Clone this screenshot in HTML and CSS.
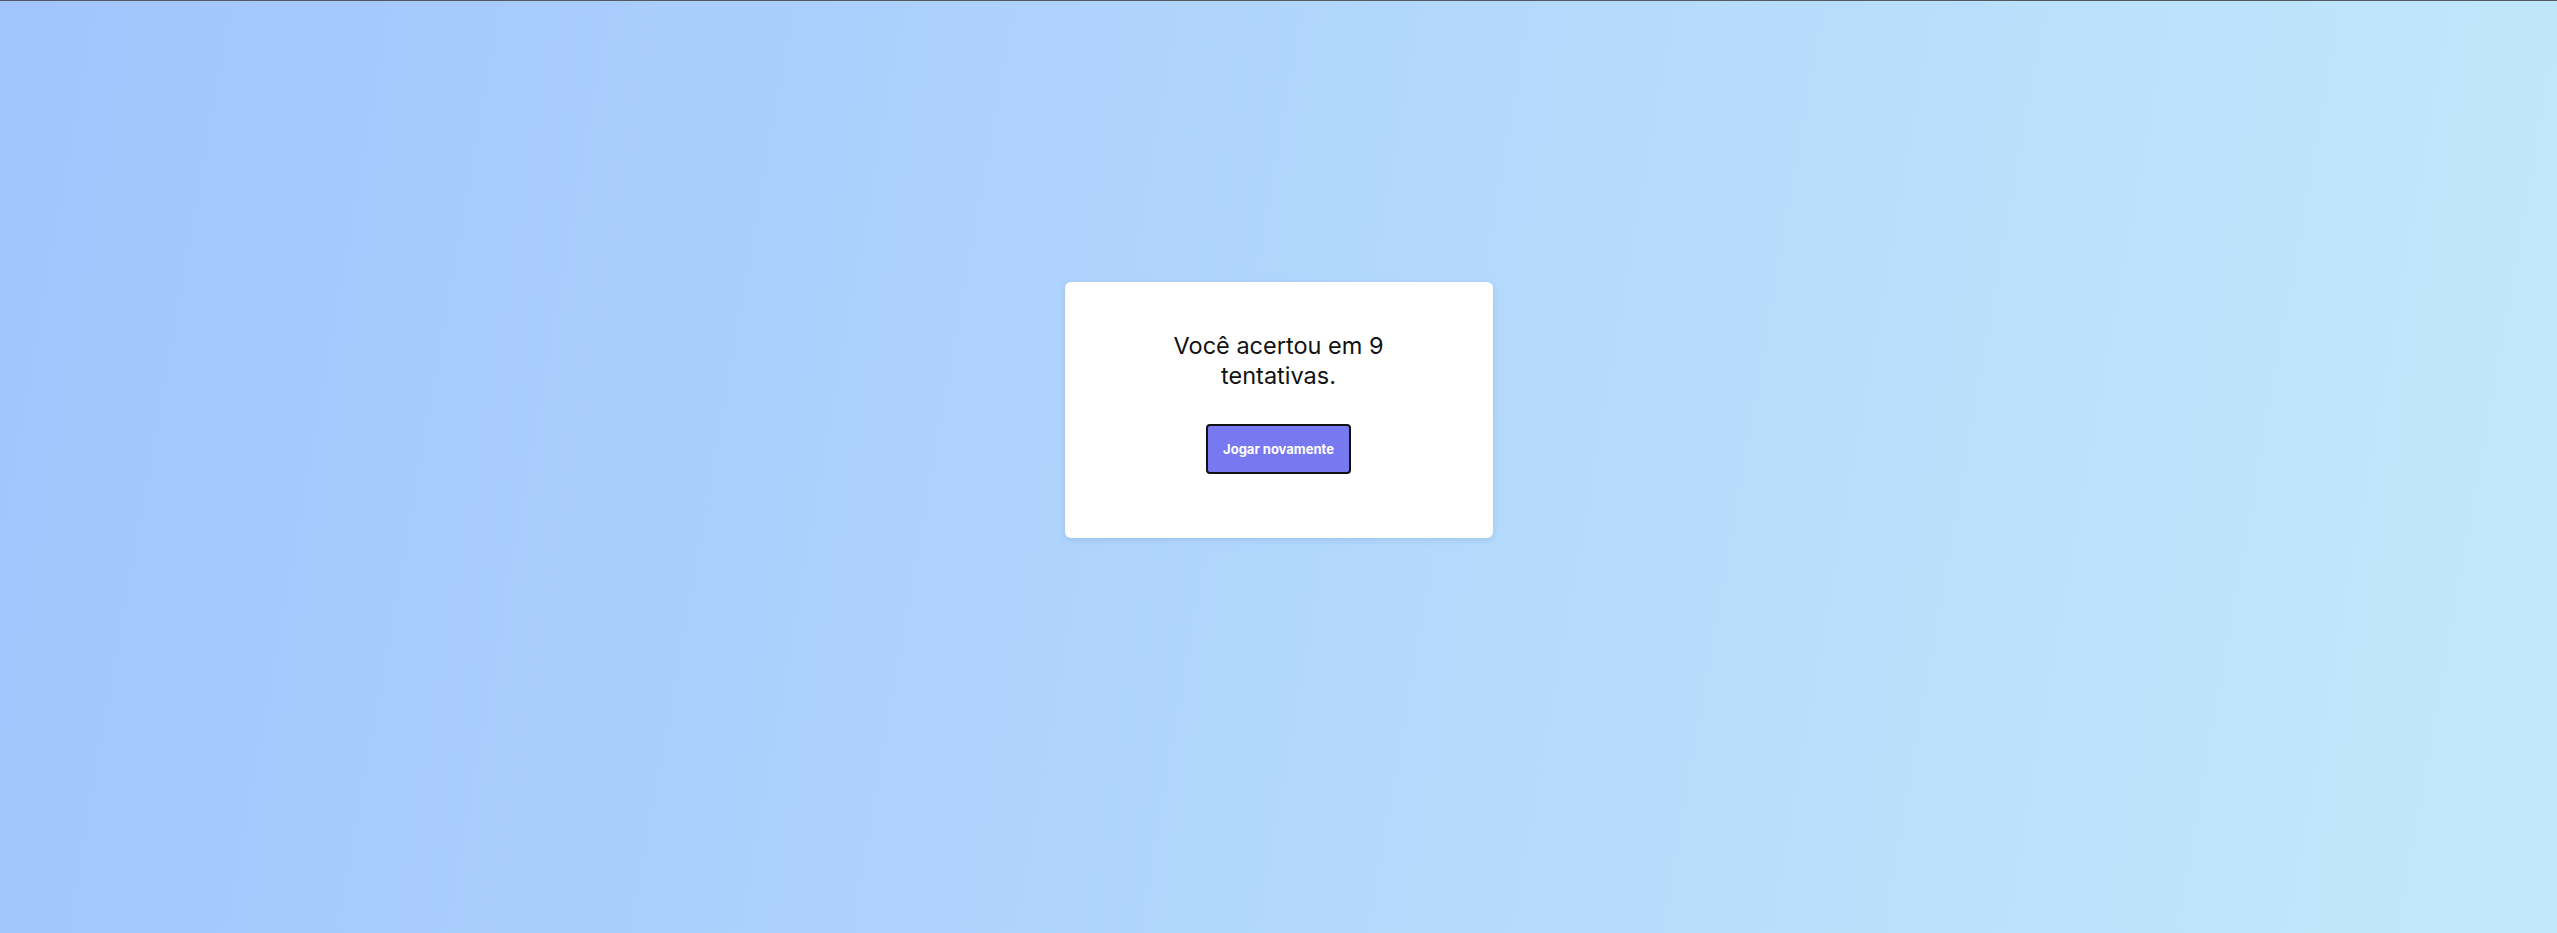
FILE: index.html
```html
<!DOCTYPE html>
<html lang="pt-BR">
<head>
<meta charset="utf-8">
<title>Resultado</title>
<link rel="stylesheet" href="styles.css">
</head>
<body>
<main class="page">
  <section class="card">
    <h2 class="result">Você acertou em 9 tentativas.</h2>
    <button class="btn" type="button">Jogar novamente</button>
  </section>
</main>
</body>
</html>
```
FILE: styles.css
```css
html, body {
  margin: 0;
  padding: 0;
  height: 100%;
}
body {
  background: linear-gradient(100deg, #a1c4fd 0%, #c2e9fb 100%);
  border-top: 1px solid #555a60;
  box-sizing: border-box;
  font-family: "Inter", "Noto Sans", sans-serif;
}
.page {
  display: flex;
  justify-content: center;
  padding-top: 281px;
}
.card {
  width: 428px;
  height: 256px;
  box-sizing: border-box;
  background: #ffffff;
  border-radius: 6px;
  box-shadow: 0 2px 6px rgba(80, 110, 160, 0.18);
  display: flex;
  flex-direction: column;
  align-items: center;
  padding: 49px 0 0;
}
.result {
  margin: 0;
  width: 240px;
  font-size: 23.5px;
  font-weight: 400;
  line-height: 30px;
  text-align: center;
  color: #111111;
}
.btn {
  margin-top: 33px;
  width: 145px;
  height: 50px;
  box-sizing: border-box;
  background: #7879f1;
  color: #ffffff;
  border: 2px solid #111111;
  border-radius: 4px;
  font-family: "Inter", "Noto Sans", sans-serif;
  font-weight: 700;
  font-size: 13px;
  padding: 0;
}
```
